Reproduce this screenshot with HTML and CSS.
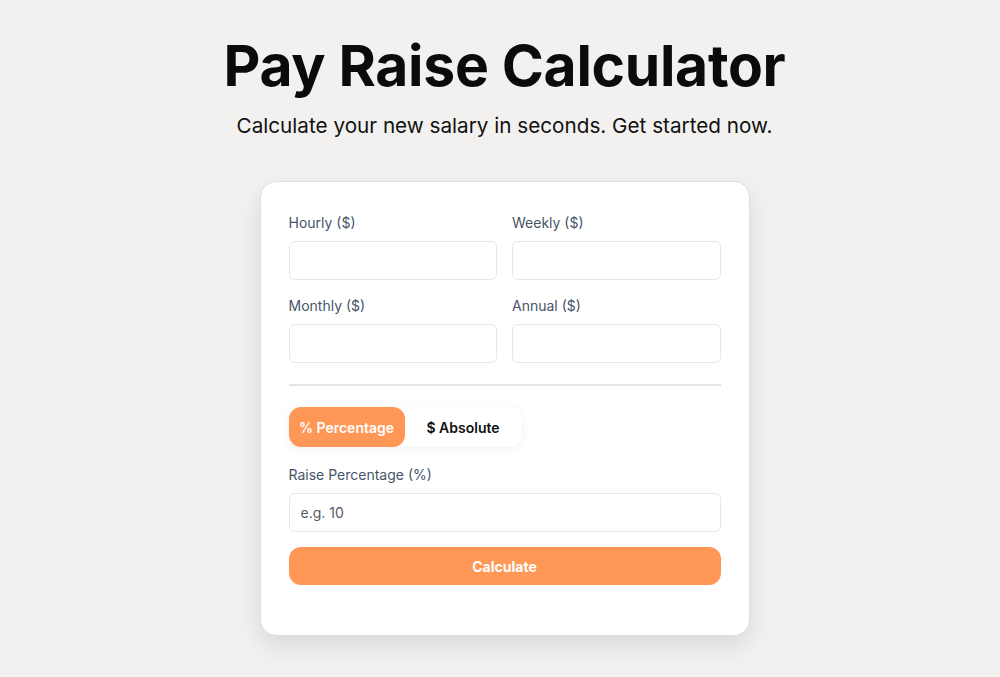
FILE: index.html
```html
<!DOCTYPE html>
<html lang="en">
<head>
<meta charset="utf-8">
<title>Pay Raise Calculator</title>
<link rel="stylesheet" href="styles.css">
</head>
<body>
<main class="page">
  <header class="hero">
    <h1 class="title">Pay Raise Calculator</h1>
    <p class="subtitle">Calculate your new salary in seconds. Get started now.</p>
  </header>
  <section class="card">
    <div class="grid">
      <div class="field">
        <label class="label">Hourly ($)</label>
        <input class="input" type="text">
      </div>
      <div class="field">
        <label class="label">Weekly ($)</label>
        <input class="input" type="text">
      </div>
      <div class="field">
        <label class="label">Monthly ($)</label>
        <input class="input" type="text">
      </div>
      <div class="field">
        <label class="label">Annual ($)</label>
        <input class="input" type="text">
      </div>
    </div>
    <hr class="divider">
    <div class="toggle">
      <button class="toggle-btn active">% Percentage</button>
      <button class="toggle-btn">$ Absolute</button>
    </div>
    <div class="field">
      <label class="label">Raise Percentage (%)</label>
      <input class="input" type="text" placeholder="e.g. 10">
    </div>
    <button class="calc">Calculate</button>
  </section>
</main>
</body>
</html>
```
FILE: styles.css
```css
* { box-sizing: border-box; }
html, body { margin: 0; padding: 0; }
body {
  background: #f2f1ef;
  font-family: Inter, "Liberation Sans", Arial, sans-serif;
  color: #111;
}
.page {
  display: flex;
  flex-direction: column;
  align-items: center;
  padding-top: 33px;
  padding-left: 9px;
  padding-bottom: 40px;
}
.hero { text-align: center; }
.title {
  margin: 0;
  font-size: 57px;
  line-height: 66px;
  font-weight: 700;
  letter-spacing: -0.3px;
  color: #0b0b0b;
}
.subtitle {
  margin: 14px 0 0;
  font-size: 20.7px;
  line-height: 26px;
  font-weight: 400;
  color: #111;
}
.card {
  margin-top: 42px;
  width: 490px;
  background: #fff;
  border: 1px solid #dedede;
  border-radius: 16px;
  padding: 31px 28px 50px;
  box-shadow: 0 10px 24px rgba(0,0,0,0.10);
}
.grid {
  display: grid;
  grid-template-columns: minmax(0, 1fr) minmax(0, 1fr);
  column-gap: 15px;
  row-gap: 16px;
}
.field {
  display: flex;
  flex-direction: column;
  gap: 8px;
  min-width: 0;
}
.label {
  font-size: 14px;
  line-height: 20px;
  color: #475569;
}
.input {
  width: 100%;
  min-width: 0;
  height: 39px;
  border: 1px solid #e5e7eb;
  border-radius: 6px;
  background: #fff;
  padding: 0 11px;
  font-family: inherit;
  font-size: 14px;
  color: #111;
  outline: none;
}
.input::placeholder { color: #555b66; }
.divider {
  border: 0;
  height: 2px;
  background: #e4e4e7;
  margin: 21px 0 21px;
}
.toggle {
  display: inline-flex;
  width: 233px;
  height: 40px;
  background: #fff;
  border-radius: 12px;
  box-shadow: 0 2px 8px rgba(60,60,120,0.08);
  margin-bottom: 18px;
}
.toggle-btn {
  border: 0;
  background: transparent;
  font-family: inherit;
  font-size: 14px;
  font-weight: 600;
  color: #111;
  border-radius: 12px;
  padding: 0 10px;
  height: 40px;
}
.toggle-btn.active {
  width: 116px;
  background: #ff9757;
  color: #fff;
}
.toggle-btn + .toggle-btn { flex: 1; }
.calc {
  margin-top: 15px;
  width: 100%;
  height: 38px;
  border: 0;
  border-radius: 12px;
  background: #ff9757;
  color: #fff;
  font-family: inherit;
  font-size: 14px;
  font-weight: 700;
}
```
